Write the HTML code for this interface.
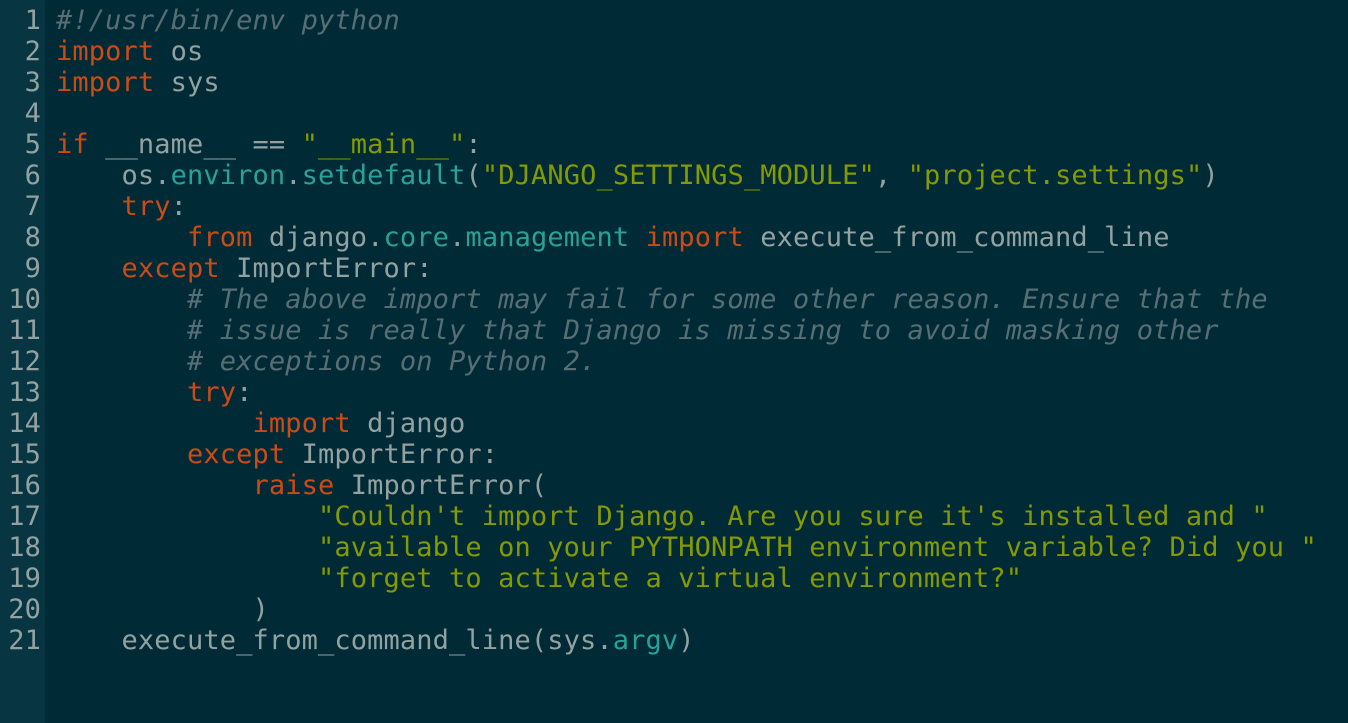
<!DOCTYPE html>
<html><head><style>
html,body{margin:0;padding:0;width:1348px;height:723px;overflow:hidden;background:#002b36;}
.g{position:absolute;left:0;top:0;width:45px;height:723px;background:#073642;}
pre{margin:0;position:absolute;top:5px;font-family:"DejaVu Sans Mono",monospace;font-size:27px;line-height:31px;color:#93a1a1;letter-spacing:0.12px;}
.n{left:0;width:41px;text-align:right;color:#93a1a1;}
.c{left:56px;}
.k{color:#cb4b16}.s{color:#859900}.t{color:#2aa198}.m{color:#586e75;font-style:italic}
</style></head><body>
<div class="g"></div>
<pre class="n">1
2
3
4
5
6
7
8
9
10
11
12
13
14
15
16
17
18
19
20
21</pre>
<pre class="c"><span class="m">#!/usr/bin/env python</span>
<span class="k">import</span> os
<span class="k">import</span> sys

<span class="k">if</span> __name__ == <span class="s">"__main__"</span>:
    os.<span class="t">environ</span>.<span class="t">setdefault</span>(<span class="s">"DJANGO_SETTINGS_MODULE"</span>, <span class="s">"project.settings"</span>)
    <span class="k">try</span>:
        <span class="k">from</span> django.<span class="t">core</span>.<span class="t">management</span> <span class="k">import</span> execute_from_command_line
    <span class="k">except</span> ImportError:
        <span class="m"># The above import may fail for some other reason. Ensure that the</span>
        <span class="m"># issue is really that Django is missing to avoid masking other</span>
        <span class="m"># exceptions on Python 2.</span>
        <span class="k">try</span>:
            <span class="k">import</span> django
        <span class="k">except</span> ImportError:
            <span class="k">raise</span> ImportError(
                <span class="s">"Couldn't import Django. Are you sure it's installed and "</span>
                <span class="s">"available on your PYTHONPATH environment variable? Did you "</span>
                <span class="s">"forget to activate a virtual environment?"</span>
            )
    execute_from_command_line(sys.<span class="t">argv</span>)</pre>
</body></html>
